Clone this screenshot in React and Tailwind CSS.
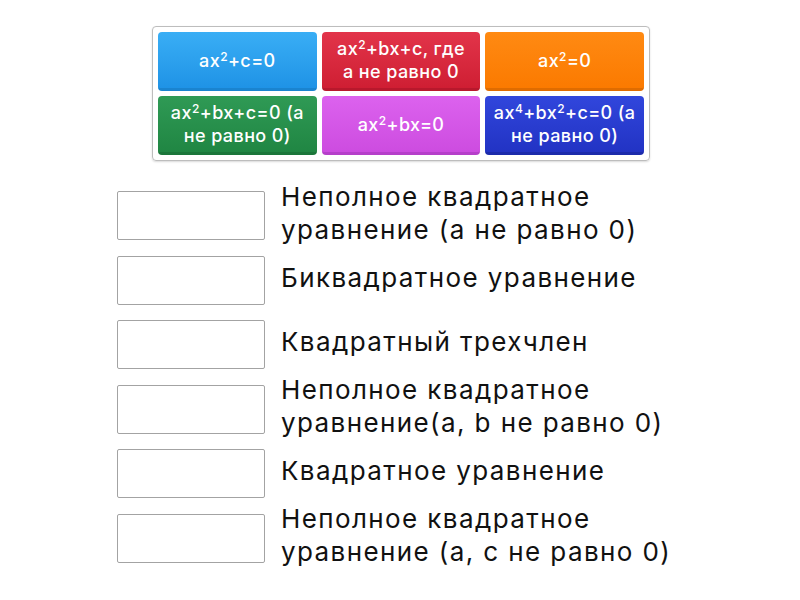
const TILES = [
  { key: 't1', bg: 'bg-gradient-to-b from-[#39aef5] to-[#1f93e6]', edge: 'border-[#1a84d0]', text: <>ax<sup className="text-[12px]">2</sup>+c=0</> },
  { key: 't2', bg: 'bg-gradient-to-b from-[#e2344a] to-[#cf1e33]', edge: 'border-[#b8182c]', text: <>ax<sup className="text-[12px]">2</sup>+bx+c, где<br />а не равно 0</> },
  { key: 't3', bg: 'bg-gradient-to-b from-[#ff8a12] to-[#fb7a00]', edge: 'border-[#e06c00]', text: <>ax<sup className="text-[12px]">2</sup>=0</> },
  { key: 't4', bg: 'bg-gradient-to-b from-[#2f9a55] to-[#208643]', edge: 'border-[#1b763a]', text: <>ax<sup className="text-[12px]">2</sup>+bx+c=0 (а<br />не равно 0)</> },
  { key: 't5', bg: 'bg-gradient-to-b from-[#dc62ee] to-[#cd4ce0]', edge: 'border-[#b63fca]', text: <>ax<sup className="text-[12px]">2</sup>+bx=0</> },
  { key: 't6', bg: 'bg-gradient-to-b from-[#3146dc] to-[#2233c4]', edge: 'border-[#1c2bab]', text: <>ax<sup className="text-[12px]">4</sup>+bx<sup className="text-[12px]">2</sup>+c=0 (а<br />не равно 0)</> },
]

const ROWS = [
  ['Неполное квадратное', 'уравнение (а не равно 0)'],
  ['Биквадратное уравнение'],
  ['Квадратный трехчлен'],
  ['Неполное квадратное', 'уравнение(a, b не равно 0)'],
  ['Квадратное уравнение'],
  ['Неполное квадратное', 'уравнение (а, с не равно 0)'],
]

export default function App() {
  return (
    <div className="w-[800px] h-[600px] bg-white relative" style={{ fontFamily: 'Inter, "Noto Sans", sans-serif' }}>
      <div className="pt-[26px] flex justify-center pl-[2px]">
        <div className="w-[498px] border border-[#bdbdbd] rounded-[4px] p-[5px] grid grid-cols-3 gap-[5px] shadow-[0_1px_2px_rgba(0,0,0,0.15)]">
          {TILES.map((t) => (
            <div
              key={t.key}
              className={`h-[59px] rounded-[4px] border-b-[3px] ${t.edge} ${t.bg} flex items-center justify-center text-center text-white text-[18px] leading-[23px] font-medium tracking-[0.4px] px-1`}
            >
              <span>{t.text}</span>
            </div>
          ))}
        </div>
      </div>

      <div className="pl-[117px] pt-[30px] flex flex-col gap-[15.5px]">
        {ROWS.map((lines, i) => (
          <div key={i} className="flex items-center gap-[16px] h-[49px]">
            <div className="w-[148px] h-[49px] shrink-0 border border-[#a3a3a3] rounded-[2px] bg-white" />
            <div className="text-[26px] leading-[33px] tracking-[1.4px] text-[#111] pb-[6px]">
              {lines.map((l) => (
                <div key={l} className="whitespace-nowrap">{l}</div>
              ))}
            </div>
          </div>
        ))}
      </div>
    </div>
  )
}
